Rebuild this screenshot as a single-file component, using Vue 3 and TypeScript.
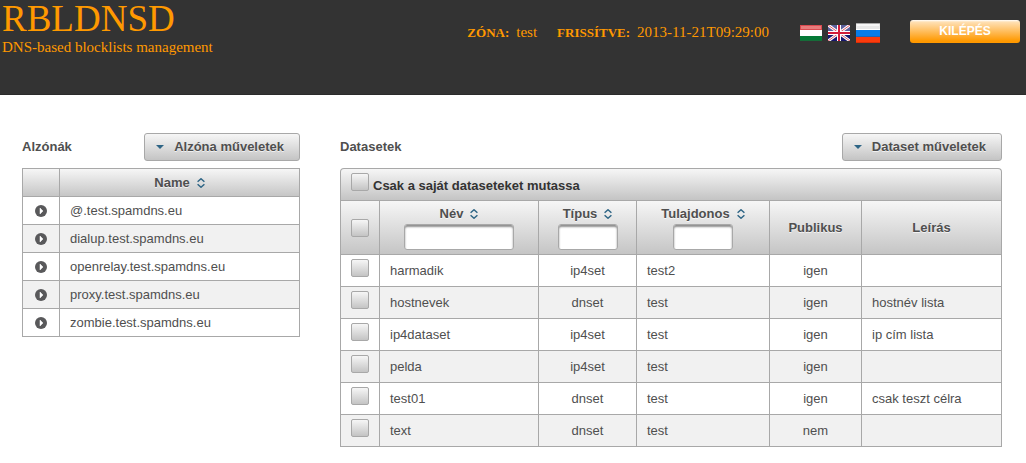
<script setup lang="ts">
import { ref } from 'vue'

interface Column {
  key: string
  label: string
  filter: 'wide' | 'narrow' | null
}

interface Dataset {
  name: string
  type: string
  owner: string
  isPublic: string
  description: string
}

const zone = 'test'
const updated = '2013-11-21T09:29:00'

const subzones: string[] = [
  '@.test.spamdns.eu',
  'dialup.test.spamdns.eu',
  'openrelay.test.spamdns.eu',
  'proxy.test.spamdns.eu',
  'zombie.test.spamdns.eu',
]

const columns: Column[] = [
  { key: 'name', label: 'Név', filter: 'wide' },
  { key: 'type', label: 'Típus', filter: 'narrow' },
  { key: 'owner', label: 'Tulajdonos', filter: 'narrow' },
  { key: 'public', label: 'Publikus', filter: null },
  { key: 'description', label: 'Leírás', filter: null },
]

const datasets: Dataset[] = [
  { name: 'harmadik', type: 'ip4set', owner: 'test2', isPublic: 'igen', description: '' },
  { name: 'hostnevek', type: 'dnset', owner: 'test', isPublic: 'igen', description: 'hostnév lista' },
  { name: 'ip4dataset', type: 'ip4set', owner: 'test', isPublic: 'igen', description: 'ip cím lista' },
  { name: 'pelda', type: 'ip4set', owner: 'test', isPublic: 'igen', description: '' },
  { name: 'test01', type: 'dnset', owner: 'test', isPublic: 'igen', description: 'csak teszt célra' },
  { name: 'text', type: 'dnset', owner: 'test', isPublic: 'nem', description: '' },
]

const ownOnly = ref(false)
const selected = ref<string[]>([])

function toggleAll(event: Event): void {
  const box = event.target as HTMLInputElement
  selected.value = box.checked ? datasets.map((d) => d.name) : []
}
</script>

<template>
  <div class="page">
    <header class="top">
      <div class="brand">
        <h1>RBLDNSD</h1>
        <p>DNS-based blocklists management</p>
      </div>
      <div class="tools">
        <dl class="status">
          <div><dt>ZÓNA:</dt><dd>{{ zone }}</dd></div>
          <div><dt>FRISSÍTVE:</dt><dd>{{ updated }}</dd></div>
        </dl>
        <nav class="flags">
          <a href="#hu" aria-label="Magyar">
            <svg width="22" height="16" viewBox="0 0 22 16">
              <rect width="22" height="5" fill="#db4a50" />
              <rect x="1" y="1" width="20" height="3" fill="#e77c7c" />
              <rect y="5" width="22" height="6" fill="#fff" />
              <rect y="11" width="22" height="5" fill="#047a36" />
              <rect y="15" width="22" height="1" fill="#166b38" />
            </svg>
          </a>
          <a href="#en" aria-label="English">
            <svg width="22" height="16" viewBox="0 0 22 16">
              <rect width="22" height="16" fill="#17176f" />
              <rect width="22" height="8" fill="#5b5f9c" />
              <path d="M0 0 22 16M22 0 0 16" stroke="#fff" stroke-width="3" />
              <path d="M0 0 22 16M22 0 0 16" stroke="#dc5a6c" stroke-width="1" />
              <path d="M11 0V16M0 8H22" stroke="#fff" stroke-width="4" />
              <path d="M11 0V16M0 8H22" stroke="#d21b3a" stroke-width="2" />
            </svg>
          </a>
          <a href="#ru" aria-label="Русский">
            <svg width="24" height="20" viewBox="0 0 24 20">
              <rect width="24" height="7" fill="#e8e8e8" />
              <rect width="24" height="1" fill="#aaa" />
              <rect x="1" y="1" width="22" height="2" fill="#f6f6f6" />
              <rect y="6" width="24" height="1" fill="#fff" />
              <rect y="7" width="24" height="7" fill="#087ce8" />
              <rect y="13" width="24" height="1" fill="#2264b4" />
              <rect y="14" width="24" height="6" fill="#fb3b0c" />
              <rect y="19" width="24" height="1" fill="#d92e08" />
            </svg>
          </a>
        </nav>
        <button type="button" class="logout">KILÉPÉS</button>
      </div>
    </header>

    <main class="content">
      <section>
        <div class="bar">
          <h2>Alzónák</h2>
          <button type="button" class="menu">
            <svg width="8" height="4" viewBox="0 0 8 4"><path d="M0 0H8L4 4Z" fill="#2e6585" /></svg>
            Alzóna műveletek
          </button>
        </div>
        <table class="subzones">
          <colgroup><col class="c-icon" /><col /></colgroup>
          <thead>
            <tr>
              <th></th>
              <th>
                <span class="label">Name
                  <svg class="sort" width="8" height="10" viewBox="0 0 8 10"><path d="M.6 3.8 4 .8 7.4 3.8M.6 6.2 4 9.2 7.4 6.2" /></svg>
                </span>
              </th>
            </tr>
          </thead>
          <tbody>
            <tr v-for="s in subzones" :key="s">
              <td class="mid">
                <button type="button" class="expand" :aria-label="s">
                  <svg width="12" height="12" viewBox="0 0 12 12">
                    <circle cx="6" cy="6" r="6" fill="#59595b" />
                    <path d="M5 3 8 6 5 9Z" fill="#fff" stroke="#fff" stroke-width=".5" />
                  </svg>
                </button>
              </td>
              <td>{{ s }}</td>
            </tr>
          </tbody>
        </table>
      </section>

      <section>
        <div class="bar">
          <h2>Datasetek</h2>
          <button type="button" class="menu">
            <svg width="8" height="4" viewBox="0 0 8 4"><path d="M0 0H8L4 4Z" fill="#2e6585" /></svg>
            Dataset műveletek
          </button>
        </div>
        <div class="caption">
          <input id="own-only" v-model="ownOnly" type="checkbox" />
          <label for="own-only">Csak a saját dataseteket mutassa</label>
        </div>
        <table class="datasets">
          <colgroup>
            <col class="c-check" /><col class="c-name" /><col class="c-type" />
            <col class="c-owner" /><col class="c-public" /><col />
          </colgroup>
          <thead>
            <tr>
              <th><input type="checkbox" aria-label="Összes" @change="toggleAll" /></th>
              <th v-for="c in columns" :key="c.key">
                <template v-if="c.filter">
                  <label class="label" :for="'filter-' + c.key">{{ c.label }}
                    <svg class="sort" width="8" height="10" viewBox="0 0 8 10"><path d="M.6 3.8 4 .8 7.4 3.8M.6 6.2 4 9.2 7.4 6.2" /></svg>
                  </label>
                  <input :id="'filter-' + c.key" type="text" class="filter" :class="c.filter" />
                </template>
                <template v-else>{{ c.label }}</template>
              </th>
            </tr>
          </thead>
          <tbody>
            <tr v-for="d in datasets" :key="d.name">
              <td class="check"><input v-model="selected" type="checkbox" :value="d.name" :aria-label="d.name" /></td>
              <td>{{ d.name }}</td>
              <td class="mid">{{ d.type }}</td>
              <td>{{ d.owner }}</td>
              <td class="mid">{{ d.isPublic }}</td>
              <td>{{ d.description }}</td>
            </tr>
          </tbody>
        </table>
      </section>
    </main>
  </div>
</template>

<style>
body {
  margin: 0;
  background: #fff;
}
</style>

<style scoped>
.page {
  font: 13px/16px "Liberation Sans", Arial, sans-serif;
  color: #4f4f4f;
}

.top {
  display: flex;
  justify-content: space-between;
  align-items: flex-start;
  box-sizing: border-box;
  min-height: 95px;
  padding: 0 6px 0 2px;
  background: #333;
  border-bottom: 1px solid #2b2b2b;
  color: #ff9900;
  font-family: Georgia, "Liberation Serif", serif;
}

.brand h1 {
  margin: 0;
  font-size: 37px;
  line-height: 38px;
  font-weight: normal;
}

.brand p {
  margin: 0;
  font-size: 15px;
  line-height: 18px;
}

.tools {
  display: flex;
  align-items: center;
  padding-top: 20px;
}

.status {
  display: flex;
  gap: 20px;
  margin: 0 31px 0 0;
  font-size: 15px;
  line-height: 24px;
}

.status div {
  display: flex;
  align-items: baseline;
  gap: 7px;
}

.status dt {
  font-weight: bold;
  font-size: 13px;
}

.status dd {
  margin: 0;
}

.flags {
  display: flex;
  align-items: center;
  gap: 6px;
  margin-right: 30px;
}

.flags a,
.flags svg {
  display: block;
}

.logout {
  align-self: flex-start;
  width: 110px;
  height: 23px;
  padding: 0;
  border: 0;
  border-radius: 3px;
  background: linear-gradient(#fff 0, #ffe0b4 2px, #ffc673 9px, #ff9900 21px);
  color: #fff;
  font: bold 12px/23px "Liberation Sans", Arial, sans-serif;
}

.content {
  display: grid;
  grid-template-columns: 278fr 662fr;
  gap: 40px;
  padding: 38px 24px 16px 22px;
}

.bar {
  display: flex;
  justify-content: space-between;
  align-items: center;
  margin-bottom: 7px;
}

h2 {
  margin: 0;
  font-size: 13px;
  line-height: 16px;
}

.menu {
  display: flex;
  align-items: center;
  gap: 10px;
  height: 28px;
  padding: 0 15px 0 11px;
  border: 1px solid #a8a8a8;
  border-radius: 3px;
  background: linear-gradient(#f6f6f6, #c4c4c4);
  color: #4f4f4f;
  font: bold 13px/16px "Liberation Sans", Arial, sans-serif;
  text-shadow: 0 1px 0 rgba(255, 255, 255, 0.7);
}

table {
  width: 100%;
  table-layout: fixed;
  border-collapse: collapse;
}

th,
td {
  padding: 0 10px;
  border: 1px solid #a8a8a8;
  text-align: left;
  box-sizing: border-box;
}

th {
  padding: 0;
  text-align: center;
  text-shadow: 0 1px 0 rgba(255, 255, 255, 0.7);
}

thead tr,
.caption {
  background: linear-gradient(#f6f6f6, #c4c4c4);
}

tbody tr:nth-child(even) {
  background: #f1f1f1;
}

.subzones tr {
  height: 28px;
}

.datasets thead tr {
  height: 54px;
}

.datasets tbody tr {
  height: 32px;
}

td.mid {
  padding: 0;
  text-align: center;
}

td.check {
  padding: 4px 0 0;
  text-align: center;
  vertical-align: top;
}

.c-icon { width: 37px; }
.c-check { width: 39px; }
.c-name { width: 159px; }
.c-type { width: 98px; }
.c-owner { width: 133px; }
.c-public { width: 92px; }

.label {
  display: flex;
  justify-content: center;
  align-items: center;
  gap: 7px;
}

.sort path {
  fill: none;
  stroke: #2e6585;
  stroke-width: 1.5;
}

.expand {
  display: block;
  margin: 0 auto;
  padding: 0;
  border: 0;
  background: none;
}

.expand svg {
  display: block;
}

.caption {
  display: flex;
  align-items: flex-start;
  gap: 4px;
  box-sizing: border-box;
  height: 32px;
  padding: 4px 10px 0;
  border: 1px solid #a8a8a8;
  border-bottom: 0;
  border-radius: 4px 4px 0 0;
  color: #333;
  font-weight: bold;
}

.caption label {
  padding-top: 5px;
}

input[type="checkbox"] {
  appearance: none;
  display: block;
  flex: none;
  box-sizing: border-box;
  width: 18px;
  height: 18px;
  margin: 0 auto;
  border: 1px solid #a8a8a8;
  border-radius: 2px;
  background: linear-gradient(#f6f6f6, #c4c4c4);
}

.caption input[type="checkbox"] {
  margin: 0;
}

input[type="checkbox"]:checked {
  background: #2e6585;
}

.filter {
  display: block;
  box-sizing: border-box;
  height: 26px;
  margin: 2px auto 0;
  padding: 0 4px;
  border: 1px solid #a8a8a8;
  border-radius: 3px;
  background: #fff;
  box-shadow: inset 0 2px 2px #8f8f8f;
  color: inherit;
  font: inherit;
}

.filter.wide { width: 110px; }
.filter.narrow { width: 60px; }
</style>
